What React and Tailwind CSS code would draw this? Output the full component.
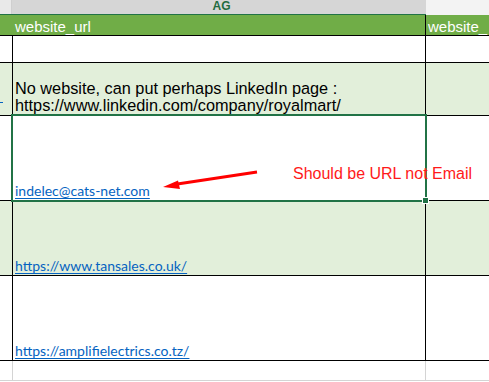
import React from "react";

const arial = { fontFamily: '"Liberation Sans", Arial, sans-serif' };
const linkFont = { fontFamily: 'Lato, "Open Sans", sans-serif' };

function Row({ h, bg = "bg-white", border = "border-black", children, right = null, leftExtra = null }) {
  return (
    <div className={`flex ${h} ${bg} border-b ${border}`}>
      <div className={`relative w-[13px] shrink-0 border-r ${border}`}>{leftExtra}</div>
      <div className={`relative w-[413px] shrink-0 border-r ${border} flex flex-col justify-end pl-[2px] pb-[2px]`}>
        {children}
      </div>
      <div className="flex-1">{right}</div>
    </div>
  );
}

function Link({ children }) {
  return (
    <div className="translate-y-[4px]">
      <span
        className="text-[14px] leading-[16px] text-[#0563c1] underline underline-offset-[2px]"
        style={linkFont}
      >
        {children}
      </span>
    </div>
  );
}

export default function App() {
  return (
    <div className="relative w-[489px] h-[382px] overflow-hidden bg-white">
      {/* column letters */}
      <div className="flex h-[15px] border-b border-[#217346]">
        <div className="w-[12px] shrink-0 bg-[#e9e9e9] border-r border-[#cfcfcf]" />
        <div className="w-[414px] shrink-0 bg-[#d6d6d6] flex justify-center items-start">
          <span className="text-[12px] font-bold text-[#1f6b3f] leading-[12px] pl-[5px]" style={arial}>AG</span>
        </div>
        <div className="flex-1 bg-[#f3f3f3] -mb-px" />
      </div>

      {/* header row */}
      <div className="flex h-[21px] bg-[#70ad47] border-b border-black">
        <div className="w-[13px] shrink-0" />
        <div className="w-[413px] shrink-0 border-r border-black pl-[2px] flex items-center pt-[2px]">
          <span className="text-[15px] text-white leading-none" style={arial}>website_url</span>
        </div>
        <div className="flex-1 pl-[2px] flex items-center pt-[2px] overflow-hidden">
          <span className="text-[15px] text-white leading-none whitespace-nowrap" style={arial}>website_</span>
        </div>
      </div>

      <Row h="h-[27px]" />

      <Row
        h="h-[53px]"
        bg="bg-[#e2efda]"
        leftExtra={<div className="absolute left-0 bottom-[12px] w-[3px] h-px bg-[#0563c1]" />}
      >
        <div className="text-[16.3px] leading-[16.5px] text-black" style={arial}>
          <div>No website, can put perhaps LinkedIn page :</div>
          <div>https://www.linkedin.com/company/royalmart/</div>
        </div>
      </Row>

      <Row h="h-[85px]">
        <Link>indelec@cats-net.com</Link>
      </Row>

      <Row h="h-[75px]" bg="bg-[#e2efda]">
        <Link>https://www.tansales.co.uk/</Link>
      </Row>

      <Row h="h-[85px]">
        <Link>https://amplifielectrics.co.tz/</Link>
      </Row>

      <div className="flex h-[20px] border-b border-[#d4d4d4]">
        <div className="w-[13px] shrink-0 border-r border-[#d4d4d4]" />
        <div className="w-[413px] shrink-0 border-r border-[#d4d4d4]" />
        <div className="flex-1" />
      </div>

      {/* active cell outline */}
      <div className="absolute left-[11px] top-[114px] w-[416px] h-[88px] border-2 border-[#217346] pointer-events-none" />
      <div className="absolute left-[423px] top-[198px] w-[5px] h-[5px] bg-[#217346] border border-white box-content -translate-x-px -translate-y-px" />

      {/* annotation */}
      <svg className="absolute left-0 top-0 pointer-events-none" width="489" height="382">
        <line x1="257" y1="172" x2="174" y2="184.5" stroke="#ff0000" strokeWidth="3" />
        <polygon points="163,187 178,180.5 180,189" fill="#ff0000" />
      </svg>
      <span
        className="absolute left-[293px] top-[165px] text-[16px] leading-[18px] text-[#ff1a1a] whitespace-nowrap"
        style={arial}
      >
        Should be URL not Email
      </span>
    </div>
  );
}
